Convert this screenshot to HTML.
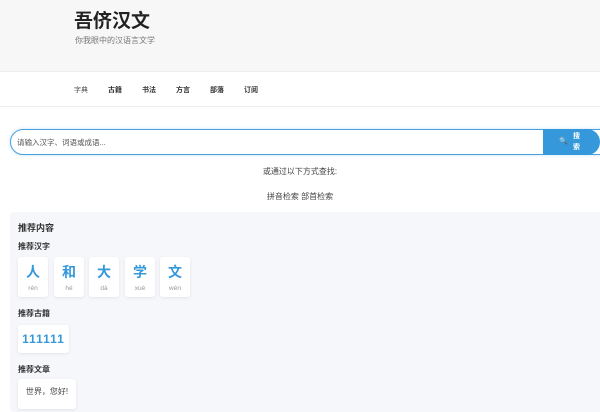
<!DOCTYPE html>
<html><head><meta charset="utf-8"><style>
*{margin:0;padding:0;box-sizing:border-box}
body{width:600px;height:400px;overflow:hidden;background:#fff;font-family:"Liberation Sans","Noto Sans CJK SC",sans-serif;color:#333}
.hd{position:absolute;left:0;top:0;width:600px;height:72px;background:#f7f7f7;border-bottom:1px solid #eee}
.t{position:absolute;left:74px;top:9px;font-size:19px;line-height:26px;font-weight:bold;color:#222}
.st{position:absolute;left:75px;top:36px;font-size:8px;line-height:10px;color:#777}
.nav{position:absolute;left:0;top:72px;width:600px;height:35px;border-bottom:1px solid #eee}
.nav span{position:absolute;top:13px;font-size:7px;font-weight:bold;color:#333}
.sb{position:absolute;left:10px;top:129px;width:600px;height:26px;border:1px solid #4a9fdc;border-radius:13px 0 0 13px;box-shadow:0 0 3px rgba(52,152,219,.3)}
.sb .p{position:absolute;left:6px;top:7px;font-size:7.5px;color:#555}
.btn{position:absolute;left:543px;top:129px;width:57px;height:26px;background:#3498db;border-radius:0 13px 13px 0;color:#fff;font-size:7px;font-weight:bold}
.c{position:absolute;width:600px;text-align:center;font-size:8px;color:#444}
.pn{position:absolute;left:10px;top:212px;width:600px;height:200px;background:#f5f7fa;border-radius:4px}
.h{position:absolute;font-weight:bold;color:#333}
.cd{position:absolute;background:#fff;border-radius:3px;box-shadow:0 1px 3px rgba(0,0,0,.08);text-align:center}
.cd b{display:block;color:#3498db;font-size:14px;margin-top:5px}
.cd i{display:block;font-style:normal;font-size:6.5px;color:#999;margin-top:3px}
</style></head><body>
<div class="hd"><div class="t">吾侪汉文</div><div class="st">你我眼中的汉语言文学</div></div>
<div class="nav"><span style="left:74px;font-weight:normal;color:#555">字典</span><span style="left:108px">古籍</span><span style="left:142px">书法</span><span style="left:176px">方言</span><span style="left:210px">部落</span><span style="left:244px">订阅</span></div>
<div class="sb"><span class="p">请输入汉字、词语或成语...</span></div>
<div class="btn"><span style="position:absolute;left:16px;top:8px;font-size:7px">&#128269;</span><span style="position:absolute;left:30px;top:2px;line-height:11px">搜<br>索</span></div>
<div class="c" style="top:166px">或通过以下方式查找:</div>
<div class="c" style="top:191px">拼音检索 部首检索</div>
<div class="pn"></div>
<div class="h" style="left:18px;top:221px;font-size:9px">推荐内容</div>
<div class="h" style="left:18px;top:241px;font-size:8px">推荐汉字</div>
<div class="cd" style="left:18px;top:257px;width:30px;height:40px"><b>人</b><i>rén</i></div>
<div class="cd" style="left:54px;top:257px;width:30px;height:40px"><b>和</b><i>hé</i></div>
<div class="cd" style="left:89px;top:257px;width:30px;height:40px"><b>大</b><i>dà</i></div>
<div class="cd" style="left:125px;top:257px;width:30px;height:40px"><b>学</b><i>xué</i></div>
<div class="cd" style="left:160px;top:257px;width:30px;height:40px"><b>文</b><i>wén</i></div>
<div class="h" style="left:18px;top:308px;font-size:8px">推荐古籍</div>
<div class="cd" style="left:18px;top:325px;width:51px;height:28px"><b style="font-size:12px;margin-top:7px;letter-spacing:1px">111111</b></div>
<div class="h" style="left:18px;top:364px;font-size:8px">推荐文章</div>
<div class="cd" style="left:18px;top:379px;width:58px;height:30px;font-size:8px;color:#444;padding-top:7px">世界，您好!</div>
</body></html>
